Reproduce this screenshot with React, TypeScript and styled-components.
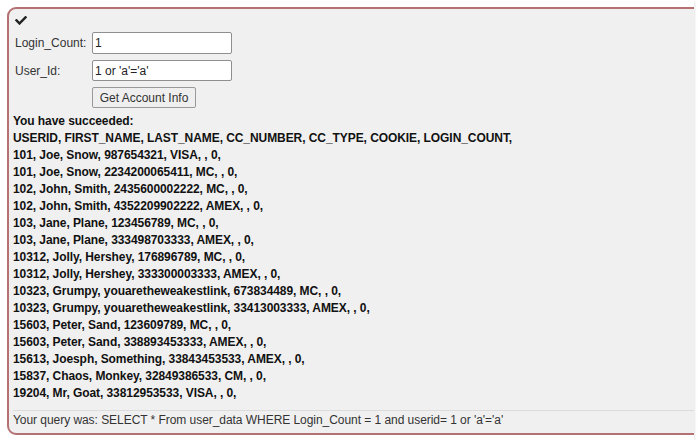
import React from 'react';
import styled, { createGlobalStyle } from 'styled-components';

const GlobalStyle = createGlobalStyle`
  html, body {
    margin: 0;
    padding: 0;
    background: #ffffff;
  }
  body {
    font-family: 'Liberation Sans', Arial, Helvetica, sans-serif;
    font-size: 12px;
    color: #222;
  }
`;

const Card = styled.div`
  width: 694px;
  height: 440px;
  background: #ffffff;
  overflow: hidden;
  box-shadow: 0 1px 3px rgba(0, 0, 0, 0.18);
  padding: 7px 0 0 7px;
  box-sizing: border-box;
`;

const Panel = styled.div`
  width: 760px;
  box-sizing: border-box;
  background: #f0f0f0;
  border: 2px solid #b57171;
  border-radius: 9px;
  padding: 0 0 4px 4px;
`;

const Header = styled.div`
  height: 23px;
  padding-left: 2px;
  display: flex;
  align-items: flex-start;

  svg {
    margin-top: 6px;
  }
`;

const Form = styled.div`
  display: grid;
  grid-template-columns: 77px 140px;
  grid-template-rows: 22px 21px 21px;
  row-gap: 6px;
  padding-left: 2px;
`;

const Label = styled.label`
  display: flex;
  align-items: center;
  color: #333;
  font-size: 12px;
`;

const TextInput = styled.input`
  box-sizing: border-box;
  width: 140px;
  height: 100%;
  margin: 0;
  padding: 0 2px;
  border: 1px solid #8f8f8f;
  border-radius: 2px;
  background: #ffffff;
  font-family: inherit;
  font-size: 12px;
  color: #222;
`;

const Button = styled.button`
  grid-column: 2;
  justify-self: start;
  box-sizing: border-box;
  height: 100%;
  width: 104px;
  margin: 0;
  padding: 0;
  border: 1px solid #999;
  border-radius: 2px;
  background: #efefef;
  font-family: inherit;
  font-size: 12px;
  color: #333;
`;

const Results = styled.div`
  margin-top: 5px;
  font-weight: bold;
  font-size: 12px;
  line-height: 17px;
  letter-spacing: -0.07px;
  color: #111;
`;

const Line = styled.div`
  white-space: nowrap;
`;

const Query = styled.div`
  margin-top: 8px;
  border-top: 1px solid #dcdcdc;
  padding: 1px 0 0 0;
  line-height: 17px;
  font-size: 12px;
  letter-spacing: -0.05px;
  color: #333;
  white-space: nowrap;
`;

const CheckIcon = () => (
  <svg width="12" height="10" viewBox="0 0 512 420" aria-hidden="true">
    <path
      fill="#222"
      d="M173.9 410.6L7.5 244.2c-10-10-10-26.2 0-36.2l36.2-36.2c10-10 26.2-10 36.2 0L192 283.9 432.1 43.8c10-10 26.2-10 36.2 0l36.2 36.2c10 10 10 26.2 0 36.2L210.1 410.6c-10 10-26.2 10-36.2 0z"
    />
  </svg>
);

const rows = [
  'USERID, FIRST_NAME, LAST_NAME, CC_NUMBER, CC_TYPE, COOKIE, LOGIN_COUNT,',
  '101, Joe, Snow, 987654321, VISA, , 0,',
  '101, Joe, Snow, 2234200065411, MC, , 0,',
  '102, John, Smith, 2435600002222, MC, , 0,',
  '102, John, Smith, 4352209902222, AMEX, , 0,',
  '103, Jane, Plane, 123456789, MC, , 0,',
  '103, Jane, Plane, 333498703333, AMEX, , 0,',
  '10312, Jolly, Hershey, 176896789, MC, , 0,',
  '10312, Jolly, Hershey, 333300003333, AMEX, , 0,',
  '10323, Grumpy, youaretheweakestlink, 673834489, MC, , 0,',
  '10323, Grumpy, youaretheweakestlink, 33413003333, AMEX, , 0,',
  '15603, Peter, Sand, 123609789, MC, , 0,',
  '15603, Peter, Sand, 338893453333, AMEX, , 0,',
  '15613, Joesph, Something, 33843453533, AMEX, , 0,',
  '15837, Chaos, Monkey, 32849386533, CM, , 0,',
  '19204, Mr, Goat, 33812953533, VISA, , 0,',
];

export default function App() {
  return (
    <>
      <GlobalStyle />
      <Card>
        <Panel>
          <Header>
            <CheckIcon />
          </Header>
          <Form>
            <Label>Login_Count:</Label>
            <TextInput defaultValue="1" />
            <Label>User_Id:</Label>
            <TextInput defaultValue="1 or 'a'='a'" />
            <Button type="button">Get Account Info</Button>
          </Form>
          <Results>
            <Line>You have succeeded:</Line>
            {rows.map((r, i) => (
              <Line key={i}>{r}</Line>
            ))}
          </Results>
          <Query>
            Your query was: SELECT * From user_data WHERE Login_Count = 1 and userid= 1 or 'a'='a'
          </Query>
        </Panel>
      </Card>
    </>
  );
}
